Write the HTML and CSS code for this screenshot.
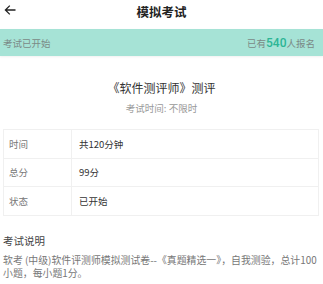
FILE: index.html
```html
<!DOCTYPE html>
<html lang="zh">
<head>
    <meta charset="UTF-8">
    <title>模拟考试</title>
    <link rel="stylesheet" href="styles.css">
</head>
<body>
    <div class="header">
        <svg class="back" width="12" height="12" viewBox="0 0 12 12">
            <path d="M11.5 6H1.5M5.8 1.6L1.4 6L5.8 10.4" fill="none" stroke="#222" stroke-width="1.3"/>
        </svg>
        <h1 class="title">模拟考试</h1>
    </div>

    <div class="banner">
        <span>考试已开始</span>
        <span>已有<b class="count">540</b>人报名</span>
    </div>

    <div class="exam">
        <h2 class="exam_name">《软件测评师》测评</h2>
        <p class="exam_time">考试时间: 不限时</p>
    </div>

    <table class="info">
        <tr><td class="label">时间</td><td class="value">共120分钟</td></tr>
        <tr><td class="label">总分</td><td class="value">99分</td></tr>
        <tr><td class="label">状态</td><td class="value">已开始</td></tr>
    </table>

    <div class="desc">
        <h3 class="desc_title">考试说明</h3>
        <p class="desc_text">软考 (中级)软件评测师模拟测试卷--《真题精选一》，自我测验，总计100小题，每小题1分。</p>
    </div>
</body>
</html>
```

FILE: styles.css
```css
*{margin:0;padding:0;box-sizing:border-box;}
body{
    font-family:"Noto Sans CJK SC","Noto Sans",sans-serif;
    background:#fff;
    color:#333;
    width:323px;
    overflow:hidden;
}
.header{height:29px;display:flex;align-items:center;justify-content:center;position:relative;}
.back{position:absolute;left:4px;top:4px;}
.title{font-size:12.5px;font-weight:bold;color:#222;line-height:18px;margin-top:-5px;}

.banner{
    height:27px;
    background:#a6e3d6;
    display:flex;
    justify-content:space-between;
    align-items:center;
    padding:0 8px 0 3px;
    font-size:9.5px;
    color:#7b8a86;
    box-shadow:0 1px 2px rgba(0,0,0,0.06);
}
.count{font-family:"Roboto",sans-serif;font-size:12px;font-weight:500;color:#2cb595;}

.exam{text-align:center;padding-top:23px;}
.exam_name{font-size:12px;font-weight:normal;color:#333;line-height:18px;}
.exam_time{font-size:9.5px;color:#999;line-height:14px;margin-top:4px;}

.info{
    margin:14px 4px 0 3px;
    width:316px;
    border-collapse:collapse;
    font-size:9.5px;
}
.info td{border:1px solid #f0f0f0;height:28.5px;padding:0 5px;}
.info .label{width:68px;color:#777;}
.info .value{color:#333;padding-left:7px;}

.desc{padding:17px 2px 0 3px;}
.desc_title{font-size:10.5px;font-weight:normal;color:#444;line-height:16px;}
.desc_text{font-size:9.9px;color:#777;line-height:13.5px;margin-top:5px;}
```
